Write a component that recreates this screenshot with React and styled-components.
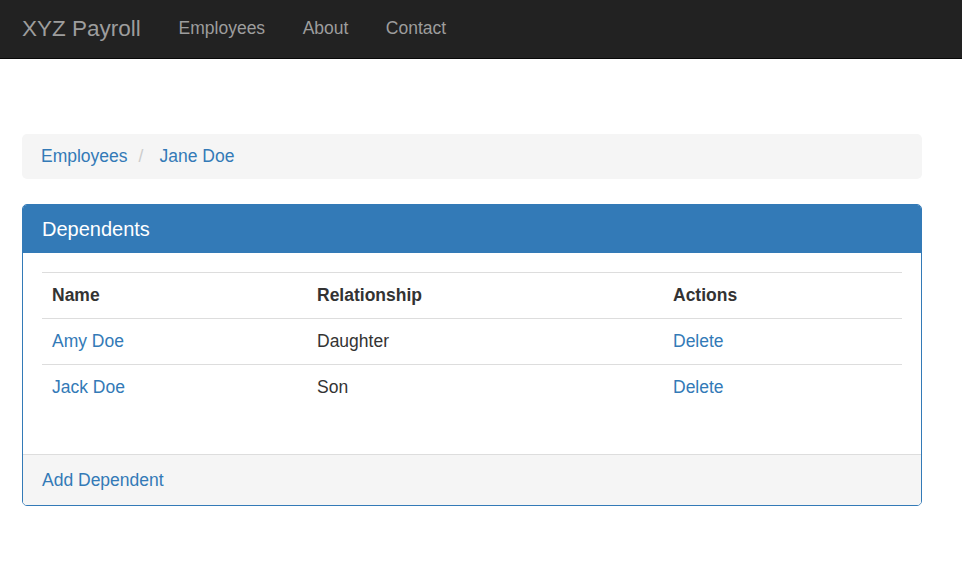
import React from "react";
import styled, { createGlobalStyle } from "styled-components";

const GlobalStyle = createGlobalStyle`
  html, body {
    margin: 0;
    padding: 0;
    background: #fff;
  }
  body {
    font-family: "Liberation Sans", Arial, Helvetica, sans-serif;
    font-size: 17.5px;
    line-height: 25px;
    color: #333;
  }
  * {
    box-sizing: border-box;
  }
`;

const Navbar = styled.nav`
  height: 59px;
  background-color: #222;
  border-bottom: 1px solid #080808;
  display: flex;
  align-items: center;
  padding: 0 0 2px 22px;
`;

const Brand = styled.a`
  font-size: 22.5px;
  color: #9d9d9d;
  text-decoration: none;
  padding-right: 19px;
`;

const NavLink = styled.a`
  font-size: 17.5px;
  color: #9d9d9d;
  text-decoration: none;
  padding: 0 18.75px;
`;

const Main = styled.main`
  padding: 75px 40px 0 22px;
`;

const Breadcrumb = styled.ol`
  list-style: none;
  margin: 0 0 25px;
  padding: 10px 19px;
  background-color: #f5f5f5;
  border-radius: 5px;
  display: flex;
  align-items: center;
`;

const Crumb = styled.li`
  display: flex;
`;

const Separator = styled.span`
  color: #ccc;
  padding: 0 16px 0 11px;
`;

const Link = styled.a`
  color: #337ab7;
  text-decoration: none;
`;

const Panel = styled.section`
  border: 1px solid #337ab7;
  border-radius: 5px;
  overflow: hidden;
`;

const PanelHeading = styled.div`
  background-color: #337ab7;
  color: #fff;
  padding: 12.5px 19px;
  border-bottom: 1px solid #337ab7;
`;

const PanelTitle = styled.h3`
  margin: 0;
  font-size: 20px;
  font-weight: normal;
  line-height: 22px;
`;

const PanelBody = styled.div`
  padding: 19px;
`;

const Table = styled.table`
  width: 100%;
  border-collapse: collapse;
  border-spacing: 0;
  margin-bottom: 25px;
`;

const Cell = styled.td`
  padding: 10px;
  border-top: 1px solid #ddd;
  text-align: left;
  vertical-align: top;
  font-weight: ${(p) => (p.$head ? "bold" : "normal")};
  line-height: 25px;
`;

const PanelFooter = styled.div`
  background-color: #f5f5f5;
  border-top: 1px solid #ddd;
  padding: 12.5px 19px;
`;

const dependents = [
  { name: "Amy Doe", relationship: "Daughter" },
  { name: "Jack Doe", relationship: "Son" },
];

export default function App() {
  return (
    <>
      <GlobalStyle />
      <Navbar>
        <Brand href="#">XYZ Payroll</Brand>
        <NavLink href="#">Employees</NavLink>
        <NavLink href="#">About</NavLink>
        <NavLink href="#">Contact</NavLink>
      </Navbar>
      <Main>
        <Breadcrumb>
          <Crumb>
            <Link href="#">Employees</Link>
          </Crumb>
          <Crumb>
            <Separator>/</Separator>
            <Link href="#">Jane Doe</Link>
          </Crumb>
        </Breadcrumb>
        <Panel>
          <PanelHeading>
            <PanelTitle>Dependents</PanelTitle>
          </PanelHeading>
          <PanelBody>
            <Table>
              <colgroup>
                <col style={{ width: 265 }} />
                <col style={{ width: 356 }} />
                <col />
              </colgroup>
              <tbody>
                <tr>
                  <Cell as="th" $head>Name</Cell>
                  <Cell as="th" $head>Relationship</Cell>
                  <Cell as="th" $head>Actions</Cell>
                </tr>
                {dependents.map((d) => (
                  <tr key={d.name}>
                    <Cell>
                      <Link href="#">{d.name}</Link>
                    </Cell>
                    <Cell>{d.relationship}</Cell>
                    <Cell>
                      <Link href="#">Delete</Link>
                    </Cell>
                  </tr>
                ))}
              </tbody>
            </Table>
          </PanelBody>
          <PanelFooter>
            <Link href="#">Add Dependent</Link>
          </PanelFooter>
        </Panel>
      </Main>
    </>
  );
}
